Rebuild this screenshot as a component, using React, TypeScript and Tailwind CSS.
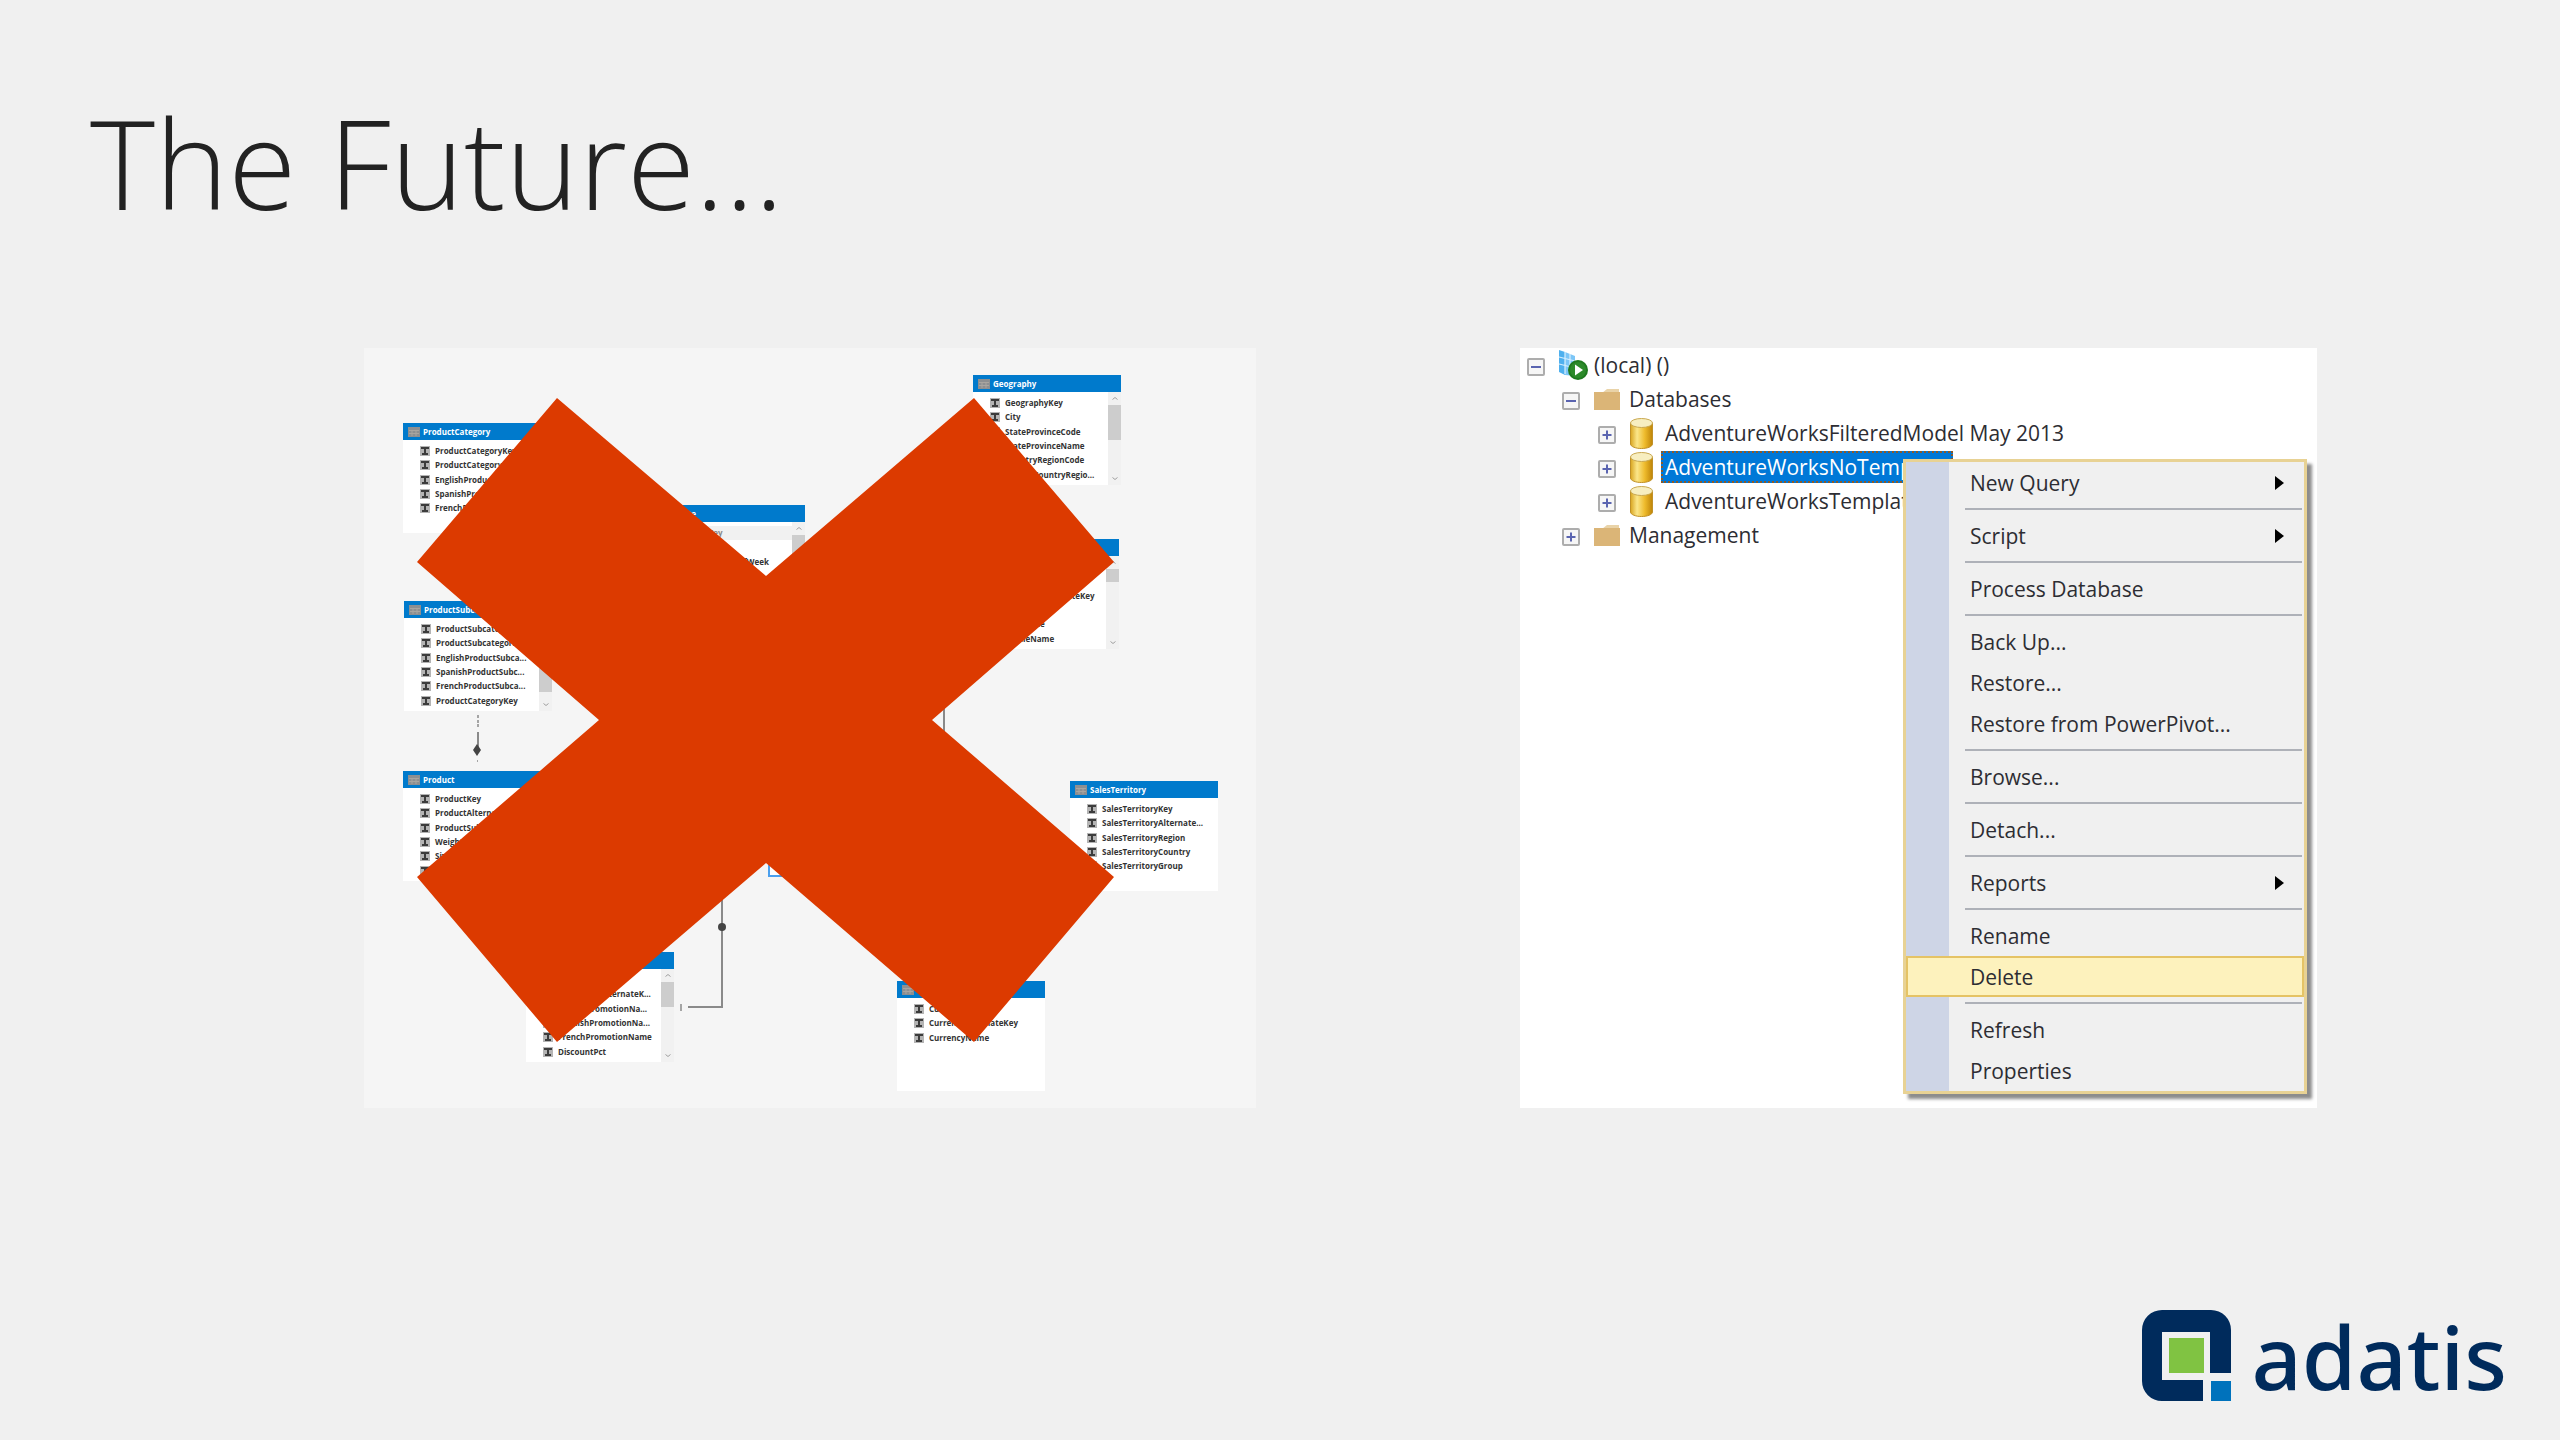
import { Fragment, type ReactNode } from "react";

type Entity = {
  name: string;
  rows: string[];
  place: string;
  thumb?: string;
  firstActive?: boolean;
};

const entities: Entity[] = [
  {
    name: "ProductCategory",
    place: "left-[39px] top-[75px]",
    rows: ["ProductCategoryKey", "ProductCategoryAlt...", "EnglishProductCate...", "SpanishProductCat...", "FrenchProductCate..."],
  },
  {
    name: "ProductSubcategory",
    place: "left-[40px] top-[253px]",
    thumb: "top-[50px] h-[41px]",
    rows: ["ProductSubcategor...", "ProductSubcategor...", "EnglishProductSubca...", "SpanishProductSubc...", "FrenchProductSubca...", "ProductCategoryKey"],
  },
  {
    name: "Product",
    place: "left-[39px] top-[423px]",
    rows: ["ProductKey", "ProductAlternateKey", "ProductSubcategor...", "WeightUnitMeasure...", "SizeUnitMeasureCo...", "EnglishProductName"],
  },
  {
    name: "Date",
    place: "left-[293px] top-[157px]",
    thumb: "top-[30px] h-[30px]",
    firstActive: true,
    rows: ["DateKey", "FullDate", "DayNumberOfWeek", "EnglishDayNameO...", "SpanishDayNameO...", "FrenchDayNameOf..."],
  },
  {
    name: "Geography",
    place: "left-[609px] top-[27px]",
    thumb: "top-[30px] h-[35px]",
    rows: ["GeographyKey", "City", "StateProvinceCode", "StateProvinceName", "CountryRegionCode", "EnglishCountryRegio..."],
  },
  {
    name: "Customer",
    place: "left-[607px] top-[191px]",
    thumb: "top-[30px] h-[13px]",
    rows: ["CustomerKey", "GeographyKey", "CustomerAlternateKey", "Title", "FirstName", "MiddleName"],
  },
  {
    name: "SalesTerritory",
    place: "left-[706px] top-[433px]",
    rows: ["SalesTerritoryKey", "SalesTerritoryAlternate...", "SalesTerritoryRegion", "SalesTerritoryCountry", "SalesTerritoryGroup"],
  },
  {
    name: "Currency",
    place: "left-[533px] top-[633px]",
    rows: ["CurrencyKey", "CurrencyAlternateKey", "CurrencyName"],
  },
  {
    name: "Promotion",
    place: "left-[162px] top-[604px]",
    thumb: "top-[30px] h-[25px]",
    rows: ["PromotionKey", "PromotionAlternateK...", "EnglishPromotionNa...", "SpanishPromotionNa...", "FrenchPromotionName", "DiscountPct"],
  },
];

function ColumnIcon() {
  return (
    <svg viewBox="0 0 10 10" className="h-[10px] w-[10px] shrink-0" aria-hidden="true">
      <rect width="10" height="10" fill="#b4b4b4" />
      <path d="M1 1h8v2H6v4h2v2H2V7h2V3H1z" fill="#3c3c3c" />
    </svg>
  );
}

function TableIcon() {
  return (
    <svg viewBox="0 0 12 10" className="h-[10px] w-[12px] shrink-0" aria-hidden="true">
      <rect width="12" height="10" fill="#8d8f91" />
      <path d="M1 3.5h10M1 6.5h10M4 3v6M8 3v6" stroke="#a9a5a0" strokeWidth="1" />
    </svg>
  );
}

function Caret({ down = false }: { down?: boolean }) {
  return (
    <svg viewBox="0 0 8 5" className="h-[5px] w-[8px]" aria-hidden="true">
      <path d={down ? "M1.5 1.5 4 3.5 6.500 1.500" : "M1.5 3.5 4 1.5 6.500 3.500"} fill="none" stroke="#a0a0a0" />
    </svg>
  );
}

function EntityCard({ entity }: { entity: Entity }) {
  return (
    <section className={`absolute w-[148px] ${entity.place}`}>
      <h2 className="flex h-[17px] items-center gap-[3px] bg-[#007acc] pl-[5px] text-[8px] leading-[14px] font-bold text-white">
        <TableIcon />
        {entity.name}
      </h2>
      <div className="h-[93px] bg-white pt-[4px]">
        <ul className="grid h-[86px] grid-rows-6 text-[8px] leading-[14px] font-bold text-[#333]">
          {entity.rows.map((row, i) => (
            <li
              key={i}
              className={`flex items-center gap-[5px] pl-[17px] whitespace-nowrap ${entity.firstActive && i === 0 ? "bg-[#f1f1f1] text-[#888]" : ""}`}
            >
              <ColumnIcon />
              {row}
            </li>
          ))}
        </ul>
      </div>
      {entity.thumb && (
        <div className="absolute top-[17px] right-0 bottom-0 flex w-[13px] flex-col items-center justify-between bg-[#f1f1f1] py-[4px]">
          <Caret />
          <Caret down />
        </div>
      )}
      {entity.thumb && <div className={`absolute right-0 w-[13px] bg-[#cdcdcd] ${entity.thumb}`} />}
    </section>
  );
}

function ModelDiagram() {
  return (
    <div className="relative h-[760px] overflow-hidden bg-[#f5f5f5] font-['Open_Sans',sans-serif]">
      <svg viewBox="0 0 892 760" className="absolute top-0 left-0 h-[760px] w-[892px]" aria-hidden="true">
        <g fill="none" stroke="#8a8a8a" strokeWidth="2">
          <path d="M114 384v18M358 552v107h-34M580 358v34" />
          <path d="M114 367v8M114 376v4M113 413h1" stroke="#a5a5a5" strokeDasharray="3 2" />
          <path d="M317 656v7" stroke="#a5a5a5" />
        </g>
        <path d="M113 396l4 6-4 6-4-6z" fill="#444" />
        <circle cx="358" cy="579" r="4" fill="#444" />
        <rect x="405" y="420" width="148" height="108" fill="#fff" stroke="#4ba0ee" strokeWidth="2" />
      </svg>
      {entities.map((e) => (
        <EntityCard key={e.name} entity={e} />
      ))}
      <svg viewBox="0 0 892 760" className="absolute top-0 left-0 h-[760px] w-[892px]" role="img" aria-label="Crossed out">
        <polygon
          fill="#dc3a00"
          points="193,50 402,228 610,50 750,214 568,372 750,529 610,694 402,515 193,694 53,529 235,372 53,214"
        />
      </svg>
    </div>
  );
}

function Expander({ open = false, label }: { open?: boolean; label: string }) {
  return (
    <button type="button" aria-label={`${open ? "Collapse" : "Expand"} ${label}`} aria-expanded={open} className="mt-[4px] shrink-0">
      <svg viewBox="0 0 18 18" className="h-[18px] w-[18px]">
        <rect x="1" y="1" width="16" height="16" rx="1" fill="#f6f6f6" stroke="#adadad" strokeWidth="2" />
        <path d={open ? "M4 9h10" : "M4.500 9h9M9 4.500v9"} stroke="#5a64b0" strokeWidth="2" />
      </svg>
    </button>
  );
}

function ServerIcon() {
  return (
    <svg viewBox="0 0 29 30" className="h-[30px] w-[29px] shrink-0" aria-hidden="true">
      <path d="M0 0l6 2v23l-6-3z" fill="#4fb0ee" />
      <path d="M6 2l10 4v20l-10-1z" fill="#7cc6f7" />
      <path d="M0 7l16 4M0 14l16 4M6 2v22M11 4v20" stroke="#d9f0ff" strokeWidth="1.200" />
      <circle cx="19" cy="20" r="10" fill="#1f7a1f" />
      <circle cx="19" cy="20" r="8" fill="#2c8a2a" />
      <path d="M16 14.500v11l8-5.500z" fill="#fff" />
    </svg>
  );
}

function FolderIcon() {
  return (
    <svg viewBox="0 0 26 23" className="h-[23px] w-[26px] shrink-0" aria-hidden="true">
      <path d="M8 5l5-4h12v6H8z" fill="#e9d3a8" />
      <path d="M0 4h9l3 0h14v18H0z" fill="#dbb577" />
    </svg>
  );
}

function DatabaseIcon() {
  return (
    <svg viewBox="0 0 23 31" className="h-[31px] w-[23px] shrink-0" aria-hidden="true">
      <defs>
        <linearGradient id="cylinder" x1="0" x2="1" y1="0" y2="0">
          <stop offset="0" stopColor="#d9a520" />
          <stop offset="0.300" stopColor="#fbe68a" />
          <stop offset="0.650" stopColor="#eebb2c" />
          <stop offset="1" stopColor="#bf8408" />
        </linearGradient>
      </defs>
      <path d="M.5 5v21c0 2.500 5 4.500 11 4.500s11-2 11-4.500V5z" fill="url(#cylinder)" stroke="#c09128" />
      <ellipse cx="11.500" cy="5" rx="11" ry="4.500" fill="#f7eec0" stroke="#c9a850" />
    </svg>
  );
}

type Node = { label: string; indent: string; open?: boolean; icon: ReactNode; selected?: boolean };

const nodes: Node[] = [
  { label: "(local) ()", indent: "pl-[7px]", open: true, icon: <ServerIcon /> },
  { label: "Databases", indent: "pl-[42px]", open: true, icon: <FolderIcon /> },
  { label: "AdventureWorksFilteredModel May 2013", indent: "pl-[78px]", icon: <DatabaseIcon /> },
  { label: "AdventureWorksNoTemplate", indent: "pl-[78px]", icon: <DatabaseIcon />, selected: true },
  { label: "AdventureWorksTemplate", indent: "pl-[78px]", icon: <DatabaseIcon /> },
  { label: "Management", indent: "pl-[42px]", icon: <FolderIcon /> },
];

type Item = { label: string; submenu?: boolean; active?: boolean };

const groups: Item[][] = [
  [{ label: "New Query", submenu: true }],
  [{ label: "Script", submenu: true }],
  [{ label: "Process Database" }],
  [{ label: "Back Up..." }, { label: "Restore..." }, { label: "Restore from PowerPivot..." }],
  [{ label: "Browse..." }],
  [{ label: "Detach..." }],
  [{ label: "Reports", submenu: true }],
  [{ label: "Rename" }, { label: "Delete", active: true }],
  [{ label: "Refresh" }, { label: "Properties" }],
];

function ContextMenu() {
  return (
    <div
      role="menu"
      className="absolute top-[111px] left-[383px] w-[404px] border-[3px] border-[#e8d294] bg-[linear-gradient(to_right,#ced5e6_43px,#f0f0f0_43px)] shadow-[5px_5px_3px_0_#8c8c8c]"
    >
      {groups.map((group, g) => (
        <Fragment key={g}>
          {g > 0 && (
            <div role="separator" className="mr-[2px] ml-[59px] flex h-[12px] items-center">
              <div className="h-[2px] w-full bg-[#aeb1b8]" />
            </div>
          )}
          {group.map((item) => (
            <button
              key={item.label}
              type="button"
              role="menuitem"
              className={`flex h-[41px] w-full items-center justify-between border-2 pr-[18px] pl-[62px] text-left ${item.active ? "border-[#e5c365] bg-[#fdf2bd]" : "border-transparent"}`}
            >
              {item.label}
              {item.submenu && (
                <svg viewBox="0 0 9 14" className="h-[14px] w-[9px]" aria-hidden="true">
                  <path d="M0 0l9 7-9 7z" fill="#000" />
                </svg>
              )}
            </button>
          ))}
        </Fragment>
      ))}
    </div>
  );
}

function ObjectExplorer() {
  return (
    <div className="relative h-[760px] bg-white font-['Open_Sans',sans-serif] text-[21px] leading-[28px] text-[#2d2d33]">
      <ul role="tree">
        {nodes.map((n) => (
          <li key={n.label} role="treeitem" aria-selected={!!n.selected} className={`flex h-[34px] items-center whitespace-nowrap ${n.indent}`}>
            <Expander open={n.open} label={n.label} />
            <span className="ml-[14px] flex w-[31px]">{n.icon}</span>
            <span
              className={`border-2 px-[2px] ${n.selected ? "border-dotted border-[#8a5a2a] bg-[#0078d7] text-white" : "border-transparent"}`}
            >
              {n.label}
            </span>
          </li>
        ))}
      </ul>
      <ContextMenu />
    </div>
  );
}

function Logo() {
  return (
    <div className="flex items-start gap-[20px]">
      <svg viewBox="0 0 90 91" className="h-[91px] w-[90px]" aria-hidden="true">
        <path d="M20 0h49a20 20 0 0 1 20 20v43H68V22H20v48h41v21H20A20 20 0 0 1 0 71V20A20 20 0 0 1 20 0z" fill="#002b5c" />
        <rect x="27" y="28" width="35" height="35" fill="#80c342" />
        <rect x="69" y="71" width="20" height="20" fill="#0072bc" />
      </svg>
      <span className="font-['Noto_Sans',sans-serif] text-[88px] leading-[92px] font-medium text-[#002b5c]">adatis</span>
    </div>
  );
}

export default function App() {
  return (
    <div className="flex min-h-screen flex-col bg-[#f0f0f0]">
      <h1 className="pt-[82px] pl-[90px] font-['Open_Sans',sans-serif] text-[124px] leading-[160px] font-light text-[#222]">The Future...</h1>
      <main className="mt-[106px] grid grid-cols-[364fr_892fr_264fr_797fr_243fr]">
        <div className="col-start-2">
          <ModelDiagram />
        </div>
        <div className="col-start-4">
          <ObjectExplorer />
        </div>
      </main>
      <footer className="mt-auto flex justify-end pt-[40px] pr-[53px] pb-[38px]">
        <Logo />
      </footer>
    </div>
  );
}
